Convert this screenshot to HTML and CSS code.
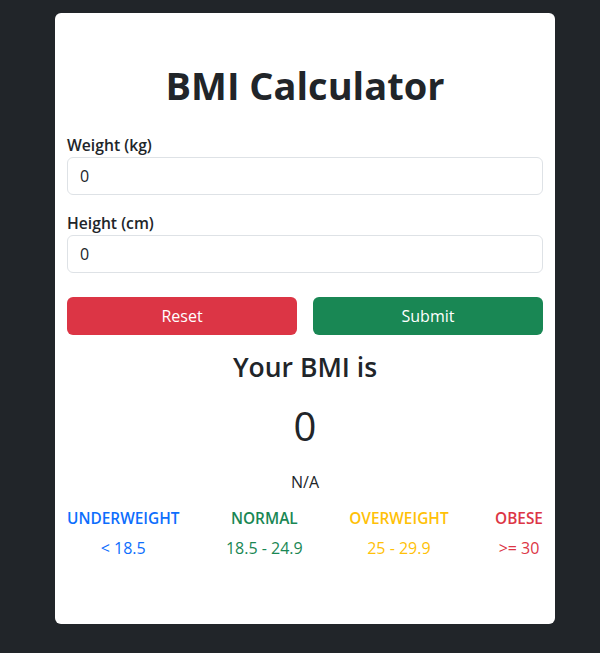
FILE: index.html
```html
<!DOCTYPE html>
<html lang="en">
<head>
<meta charset="utf-8">
<title>BMI Calculator</title>
<link rel="stylesheet" href="styles.css">
</head>
<body>
<div class="card">
  <h1 class="title">BMI Calculator</h1>
  <form class="form">
    <div class="field">
      <label class="label" for="w">Weight (kg)</label>
      <input class="input" id="w" type="text" value="0">
    </div>
    <div class="field">
      <label class="label" for="h">Height (cm)</label>
      <input class="input" id="h" type="text" value="0">
    </div>
    <div class="buttons">
      <button type="button" class="btn btn-reset">Reset</button>
      <button type="button" class="btn btn-submit">Submit</button>
    </div>
  </form>
  <div class="result">
    <h3 class="result-title">Your BMI is</h3>
    <div class="result-value">0</div>
    <div class="result-status">N/A</div>
  </div>
  <div class="categories">
    <div class="cat cat-under"><div class="cat-name">UNDERWEIGHT</div><div class="cat-range">&lt; 18.5</div></div>
    <div class="cat cat-normal"><div class="cat-name">NORMAL</div><div class="cat-range">18.5 - 24.9</div></div>
    <div class="cat cat-over"><div class="cat-name">OVERWEIGHT</div><div class="cat-range">25 - 29.9</div></div>
    <div class="cat cat-obese"><div class="cat-name">OBESE</div><div class="cat-range">&gt;= 30</div></div>
  </div>
</div>
</body>
</html>
```
FILE: styles.css
```css
* { box-sizing: border-box; }
html, body { margin: 0; padding: 0; }
body {
  background: #212529;
  font-family: "Open Sans", "Noto Sans", sans-serif;
  color: #212529;
  font-size: 16px;
  line-height: 1.5;
  padding: 13px 0 29px 55px;
}
.card {
  width: 500px;
  height: 611px;
  background: #fff;
  border-radius: 6px;
  padding: 48px 12px 0;
}
.title {
  margin: 0 0 24px;
  font-size: 38px;
  font-weight: 700;
  line-height: 48px;
  text-align: center;
}
.form { display: flex; flex-direction: column; gap: 16px; }
.field { display: flex; flex-direction: column; }
.label { font-weight: 600; font-size: 15.7px; line-height: 24px; }
.input {
  height: 38px;
  border: 1px solid #dee2e6;
  border-radius: 6px;
  padding: 6px 12px;
  font: inherit;
  color: #212529;
}
.buttons { display: flex; gap: 16px; margin-top: 8px; }
.btn {
  flex: 1;
  height: 38px;
  border: none;
  border-radius: 6px;
  color: #fff;
  font: inherit;
}
.btn-reset { background: #dc3545; }
.btn-submit { background: #198754; }
.result { text-align: center; margin-top: 15px; }
.result-title { margin: 0; font-size: 26.5px; font-weight: 600; line-height: 34px; }
.result-value { font-size: 40px; line-height: 48px; margin-top: 18px; }
.result-status { margin-top: 20px; font-size: 16px; line-height: 24px; }
.categories { display: flex; justify-content: space-between; margin-top: 13px; text-align: center; }
.cat-name { font-weight: 600; font-size: 15.4px; line-height: 24px; }
.cat-range { margin-top: 5px; font-size: 16px; line-height: 24px; }
.cat-under { color: #0d6efd; }
.cat-normal { color: #198754; }
.cat-over { color: #ffc107; }
.cat-obese { color: #dc3545; }
```
